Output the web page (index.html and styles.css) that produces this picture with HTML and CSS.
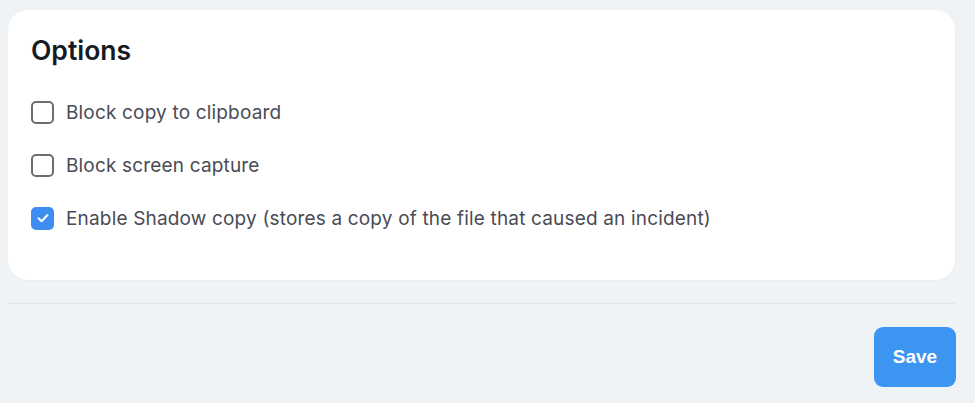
FILE: index.html
```html
<!DOCTYPE html>
<html>
<head>
<meta charset="utf-8">
<link rel="stylesheet" href="styles.css">
</head>
<body>
<div class="page">
  <section class="card">
    <h2 class="title">Options</h2>
    <ul class="options">
      <li class="option"><span class="box"></span><span class="label">Block copy to clipboard</span></li>
      <li class="option"><span class="box"></span><span class="label">Block screen capture</span></li>
      <li class="option"><span class="box checked"><svg viewBox="0 0 16 16" width="16" height="16"><path d="M3.5 8.3 L6.6 11.2 L12.5 5" fill="none" stroke="#fff" stroke-width="2" stroke-linecap="round" stroke-linejoin="round"/></svg></span><span class="label">Enable Shadow copy (stores a copy of the file that caused an incident)</span></li>
    </ul>
  </section>
  <hr class="divider">
  <div class="actions">
    <button class="save">Save</button>
  </div>
</div>
</body>
</html>
```
FILE: styles.css
```css
html, body {
  margin: 0;
  padding: 0;
  background: #f0f3f6;
  font-family: Inter, "Noto Sans", sans-serif;
}
.page {
  width: 947px;
  padding: 10px 0 0 8px;
}
.card {
  background: #fff;
  border-radius: 20px;
  height: 270px;
  box-sizing: border-box;
  padding: 24px 23px 0 23px;
  box-shadow: 0 1px 2px rgba(30, 40, 60, 0.04);
}
.title {
  margin: 0;
  font-size: 26.5px;
  font-weight: 600;
  color: #161a22;
  line-height: 32px;
}
.options {
  list-style: none;
  margin: 34px 0 0 0;
  padding: 0;
  display: flex;
  flex-direction: column;
  gap: 29px;
}
.option {
  display: flex;
  align-items: center;
  gap: 12px;
  height: 24px;
}
.box {
  width: 19px;
  height: 19px;
  border: 2px solid #6e6e72;
  border-radius: 5px;
  display: flex;
  align-items: center;
  justify-content: center;
  flex: none;
}
.box.checked {
  background: #3d8ef0;
  border-color: #3d8ef0;
}
.label {
  font-size: 19px;
  color: #4a4b55;
  letter-spacing: 0.17px;
}
.divider {
  border: none;
  border-top: 1px solid #e0e4e9;
  margin: 23px 0 0 0;
}
.actions {
  display: flex;
  justify-content: flex-end;
  margin-top: 23px;
  margin-right: -1px;
}
.save {
  width: 82px;
  height: 60px;
  border: none;
  border-radius: 9px;
  background: #3d95f2;
  color: #fff;
  font-family: "Liberation Sans", Arial, sans-serif;
  font-weight: 700;
  font-size: 19px;
}
```
